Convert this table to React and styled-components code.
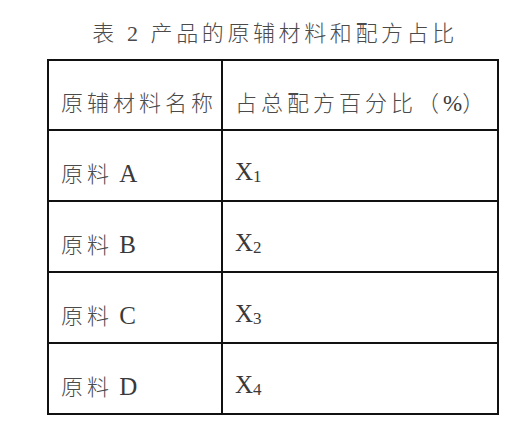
import React from "react";
import styled, { createGlobalStyle } from "styled-components";

const GlobalStyle = createGlobalStyle`
  body {
    margin: 0;
    background: #fff;
    font-family: "Liberation Serif", "Noto Sans CJK SC", serif;
  }
`;

const TextColor = "#4a4a4a";
const LatinColor = "#3a3a3a";
const LineColor = "#111";

const Page = styled.div`
  width: 526px;
  height: 427px;
  display: flex;
  flex-direction: column;
  align-items: center;
  padding: 21px 0 0 20px;
  box-sizing: border-box;
`;

const Caption = styled.div`
  font-size: 22px;
  font-weight: 300;
  letter-spacing: 3.6px;
  line-height: 26px;
  color: ${TextColor};
  margin-bottom: 12px;
  padding-left: 4px;
`;

const Table = styled.table`
  border-collapse: collapse;
  width: 450px;
  table-layout: fixed;
`;

const Cell = styled.td`
  border: 2px solid ${LineColor};
  height: ${(p) => (p.$header ? "70px" : "71px")};
  padding: 0 0 12px 12px;
  vertical-align: bottom;
  font-size: 22px;
  font-weight: 300;
  letter-spacing: 4px;
  line-height: 26px;
  color: ${TextColor};
  box-sizing: border-box;
  white-space: nowrap;
`;

const Latin = styled.span`
  font-size: ${(p) => p.$size || "25px"};
  font-weight: 400;
  letter-spacing: 0;
  color: ${LatinColor};
`;

const Sub = styled.span`
  font-size: 17px;
  font-weight: 400;
  letter-spacing: 0;
  position: relative;
  top: 2px;
  color: ${LatinColor};
`;

const rows = [
  ["A", "1"],
  ["B", "2"],
  ["C", "3"],
  ["D", "4"],
];

const App = () => {
  return (
    <Page>
      <GlobalStyle />
      <Caption>表 2 产品的原辅材料和配方占比</Caption>
      <Table>
        <colgroup>
          <col style={{ width: 174 }} />
          <col style={{ width: 276 }} />
        </colgroup>
        <tbody>
          <tr>
            <Cell $header>原辅材料名称</Cell>
            <Cell $header>
              占总配方百分比（<Latin $size="23px">%</Latin>）
            </Cell>
          </tr>
          {rows.map(([letter, n]) => (
            <tr key={n}>
              <Cell>
                原料<Latin>{" " + letter}</Latin>
              </Cell>
              <Cell>
                <Latin>X</Latin>
                <Sub>{n}</Sub>
              </Cell>
            </tr>
          ))}
        </tbody>
      </Table>
    </Page>
  );
};

export default App;
